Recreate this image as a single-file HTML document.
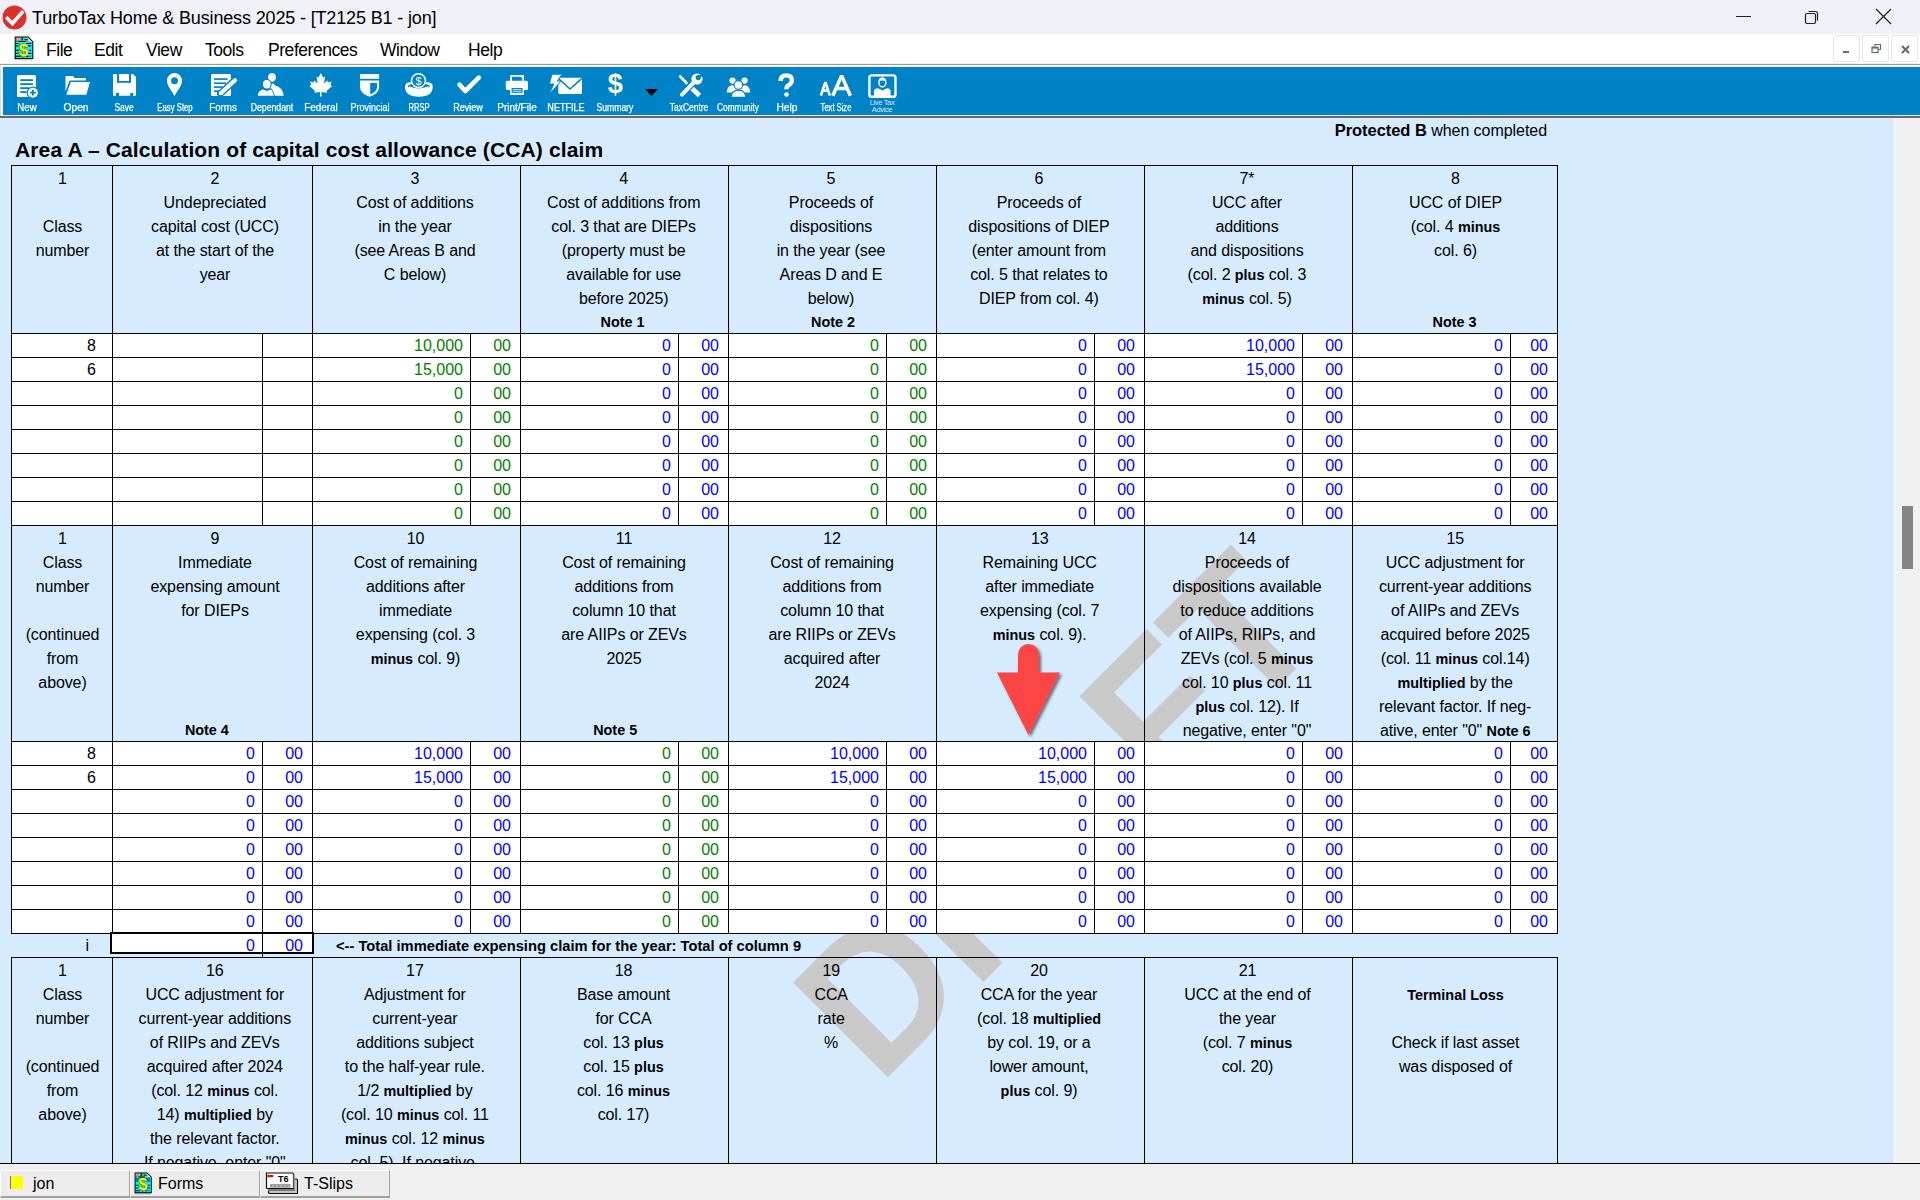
<!DOCTYPE html><html><head><meta charset="utf-8"><style>
*{margin:0;padding:0;box-sizing:border-box}
html,body{width:1920px;height:1200px;overflow:hidden;background:#fff}
body{position:relative;font-family:"Liberation Sans",sans-serif;color:#000}
.a{position:absolute}
.ln{position:absolute;background:#000}
.h{position:absolute;text-align:center;font-size:16px;line-height:24px;white-space:nowrap;letter-spacing:-0.1px}
.h b{font-size:14.4px;letter-spacing:0}
.v{position:absolute;text-align:right;font-size:16px;line-height:23px;height:23px;white-space:nowrap}
.g{color:#008000}.bl{color:#0000ff}
.tb{position:absolute;top:67px;width:49px;height:48px;color:#fff;text-align:center}
.tb span{position:absolute;left:0;right:0;top:35px;font-size:9.5px;line-height:10px;white-space:nowrap;letter-spacing:-0.3px}
.tb svg{position:absolute;left:50%;top:5px;transform:translateX(-50%)}
</style></head><body><div class="a" style="left:0;top:0;width:1920px;height:34px;background:#eff1f7"></div><svg class="a" style="left:2px;top:5px" width="25" height="25" viewBox="0 0 25 25"><circle cx="12.5" cy="12.5" r="12" fill="#d8322b"/><path d="M5.5 13.5 L10.5 18.5 L20 7.5" stroke="#fff" stroke-width="3.6" fill="none" stroke-linecap="square"/></svg><div class="a" style="left:32px;top:6px;font-size:18px;line-height:24px;white-space:nowrap;letter-spacing:-0.15px">TurboTax Home &amp; Business 2025 - [T2125 B1 - jon]</div><div class="a" style="left:1736px;top:16px;width:15px;height:1px;background:#222"></div><svg class="a" style="left:1804px;top:9px" width="16" height="16" viewBox="0 0 16 16"><rect x="1.5" y="4.5" width="10" height="10" rx="1.5" fill="none" stroke="#222" stroke-width="1.2"/><path d="M4.5 2.5 H11.5 Q13.5 2.5 13.5 4.5 V11.5" fill="none" stroke="#222" stroke-width="1.2"/></svg><svg class="a" style="left:1875px;top:8px" width="17" height="17" viewBox="0 0 17 17"><path d="M1 1 L16 16 M16 1 L1 16" stroke="#222" stroke-width="1.3"/></svg><div class="a" style="left:0;top:34px;width:1920px;height:30px;background:#fff"></div><div class="a" style="left:0;top:63px;width:1920px;height:1px;background:#f1f1f1"></div><div class="a" style="left:0;top:64px;width:1920px;height:1px;background:#9a9a9a"></div><svg class="a" style="left:14px;top:36px" width="22" height="25" viewBox="0 0 22 25">
<path d="M0.3 1.8 V23.5 H18 V24.2 H0.8 Z" fill="#9a9a9a"/>
<path d="M0.7 0.5 H14.3 L19.3 5.5 V23 H0.7 Z" fill="#000"/>
<path d="M1.7 1.5 H13.8 L18.3 6 V22 H1.7 Z" fill="#00f6f6"/>
<path d="M13.8 1.5 V6 H18.3" fill="#c8f8f8" stroke="#888" stroke-width="0.9"/>
<rect x="1.7" y="1.6" width="5.6" height="2.8" fill="#ff1a1a"/><rect x="2.6" y="2.2" width="3.8" height="1.6" fill="#fff"/><rect x="3.6" y="2.6" width="1.8" height="0.8" fill="#e00"/>
<path d="M8.3 1.5 V4.5 M10.5 3.6 H13.5 M2.5 5.5 H3.2 M4.5 5.5 H12 M1.7 7.5 H5 M12.3 7.5 H17.2 M1.7 9.9 H4.2 M13.8 9.9 H17.2 M1.7 14.4 H5 M15 14.4 H17.2 M1.7 17.4 H4.2 M13.8 17.4 H17.2 M1.7 20.4 H6.6 M12.3 20.4 H14.6 M15.8 20.4 H16.8" stroke="#000" stroke-width="1.1"/>
<text x="9.6" y="20" font-family="Liberation Sans" font-weight="bold" font-size="17" fill="#fff000" stroke="#000" stroke-width="0.6" paint-order="stroke" text-anchor="middle">$</text>
</svg><div class="a" style="left:46px;top:38px;font-size:17.5px;line-height:24px;white-space:nowrap;letter-spacing:-0.45px">File</div><div class="a" style="left:94px;top:38px;font-size:17.5px;line-height:24px;white-space:nowrap;letter-spacing:-0.45px">Edit</div><div class="a" style="left:146px;top:38px;font-size:17.5px;line-height:24px;white-space:nowrap;letter-spacing:-0.45px">View</div><div class="a" style="left:205px;top:38px;font-size:17.5px;line-height:24px;white-space:nowrap;letter-spacing:-0.45px">Tools</div><div class="a" style="left:268px;top:38px;font-size:17.5px;line-height:24px;white-space:nowrap;letter-spacing:-0.45px">Preferences</div><div class="a" style="left:380px;top:38px;font-size:17.5px;line-height:24px;white-space:nowrap;letter-spacing:-0.45px">Window</div><div class="a" style="left:468px;top:38px;font-size:17.5px;line-height:24px;white-space:nowrap;letter-spacing:-0.45px">Help</div><div class="a" style="left:1833px;top:35px;width:27px;height:27px;border:1px solid #e6e6e6;border-radius:2px;background:#fff"></div><div class="a" style="left:1862px;top:35px;width:27px;height:27px;border:1px solid #e6e6e6;border-radius:2px;background:#fff"></div><div class="a" style="left:1891px;top:35px;width:27px;height:27px;border:1px solid #e6e6e6;border-radius:2px;background:#fff"></div><div class="a" style="left:1843px;top:51px;width:6px;height:2px;background:#5f6c7a"></div><svg class="a" style="left:1870px;top:43px" width="12" height="12" viewBox="0 0 12 12"><path d="M5 3.5 V1.5 H10.5 V6.5 H8" fill="none" stroke="#5f6c7a" stroke-width="1.2"/><rect x="2" y="4.2" width="6" height="5.3" fill="none" stroke="#5f6c7a" stroke-width="1.2"/><rect x="2" y="4" width="6" height="1.6" fill="#5f6c7a"/></svg><svg class="a" style="left:1901px;top:45px" width="9" height="9" viewBox="0 0 9 9"><path d="M1 1 L8 8 M8 1 L1 8" stroke="#5f6c7a" stroke-width="2"/></svg><div class="a" style="left:0;top:65px;width:1920px;height:53px;background:#f4f4f4;border-top:1px solid #fff"></div><div class="a" style="left:3px;top:67px;width:1917px;height:48px;background:#0082c6"></div><div class="a" style="left:0;top:115px;width:1920px;height:1px;background:#e8e8e8"></div><div class="a" style="left:0;top:116px;width:1920px;height:2px;background:#6a6a6a"></div><div class="a" style="left:0;top:65px;width:1px;height:51px;background:#dcdcdc"></div><svg class="a" style="left:0;top:0" width="960" height="120" viewBox="0 0 960 120"><rect x="17" y="75" width="19" height="22" rx="1.5" fill="#fff"/><rect x="20.2" y="79.2" width="12.8" height="1.8" fill="#0082c6"/><rect x="20.2" y="83.2" width="12.8" height="1.8" fill="#0082c6"/><rect x="20.2" y="87.2" width="8.8" height="1.8" fill="#0082c6"/><rect x="20.2" y="91.2" width="6.300000000000001" height="1.8" fill="#0082c6"/><circle cx="32.9" cy="92.7" r="6.3" fill="#0082c6"/><circle cx="32.9" cy="92.7" r="5" fill="#fff"/><path d="M32.9 89.8 V95.6 M30 92.7 H35.8" stroke="#0082c6" stroke-width="1.8"/><path d="M65.5 76 H73 L74.5 78 H85.8 V80.5 H69.6 L65.5 91.5 Z" fill="#fff"/><path d="M70.8 82 H90 L86.3 94.8 H66.3 Z" fill="#fff"/><path d="M113 74 H133 L136 77 V95.8 H133.2 V93 H130.2 V95.8 H119 V93 H116 V95.8 H113 Z" fill="#fff"/><path d="M117 74 H131 V82.8 H117 Z" fill="#0082c6"/><rect x="119" y="74" width="10" height="6.9" fill="#fff"/><path d="M174.5 96.3 C171.5 90.5 167 86 167 80.6 A7.5 7.5 0 0 1 182 80.6 C182 86 177.5 90.5 174.5 96.3 Z" fill="#fff"/><circle cx="174.5" cy="80.8" r="3.5" fill="#0082c6"/><rect x="211" y="74" width="20" height="22.1" rx="1.5" fill="#fff"/><rect x="214" y="78.2" width="13.5" height="1.7" fill="#0082c6"/><rect x="214" y="82.4" width="12" height="1.7" fill="#0082c6"/><rect x="214" y="86.2" width="8.5" height="1.7" fill="#0082c6"/><rect x="214" y="90.3" width="5.5" height="1.7" fill="#0082c6"/><path d="M220.5 93.5 L235 80" stroke="#0082c6" stroke-width="7" stroke-linecap="round"/><path d="M221 93 L235 80.2" stroke="#fff" stroke-width="4.2" stroke-linecap="round"/><path d="M218.8 95.3 L219.8 91 L223.2 94.2 Z" fill="#fff"/><ellipse cx="272" cy="77.3" rx="3.9" ry="4.4" fill="#fff"/><path d="M268.6 95.7 L268.6 86 Q269.5 83.6 272 83.5 Q274.5 83.6 275 85.5 Q282.5 87 283.8 95.7 Z" fill="#fff"/><ellipse cx="266.8" cy="84.3" rx="4.9" ry="5.3" fill="#0082c6"/><path d="M256.4 96.6 Q257 89.5 262.5 88.3 L271 88.3 Q273.2 89.5 275 96.6 Z" fill="#0082c6"/><ellipse cx="266.8" cy="84.3" rx="3.8" ry="4.2" fill="#fff"/><path d="M257.8 95.7 Q258.5 90.2 263 89.4 L266.8 91 L270.5 89.4 Q273 90.5 273.8 95.7 Z" fill="#fff"/><path d="M320.8 73 L323.2 77.4 L325 76.6 L324 83.5 L327.2 80.6 L328 82.4 L331.5 81.6 L330.5 85 L332.1 86 L326.5 91 L327.2 92.8 L321.5 92.1 L321.6 96.4 L320 96.4 L320.1 92.1 L314.4 92.8 L315.1 91 L309.5 86 L311.1 85 L310.1 81.6 L313.6 82.4 L314.4 80.6 L317.6 83.5 L316.6 76.6 L318.4 77.4 Z" fill="#fff"/><rect x="360" y="74" width="19.1" height="4.8" fill="#fff"/><path d="M360 80.5 H379.1 V87 Q379.1 93.3 369.6 96.8 Q360 93.3 360 87 Z" fill="#fff"/><path d="M370.2 83 H377 V87 Q377 92 370.2 94.5 Z" fill="#0082c6"/><path d="M405 86.6 Q405 82.2 411 82.2 L426.7 82.2 Q432.7 82.2 432.7 86.6 Q432.7 96.8 418.85 96.8 Q405 96.8 405 86.6 Z" fill="#fff"/><ellipse cx="418.85" cy="86.3" rx="11.2" ry="2.9" fill="#0082c6"/><ellipse cx="418.5" cy="80.6" rx="7.7" ry="7.6" fill="#fff"/><ellipse cx="418.5" cy="80.6" rx="6.2" ry="6.2" fill="#0082c6"/><path d="M408.8 86.3 Q418.6 90.6 428.8 86.3 L428 89 Q418.6 92 409.5 89 Z" fill="#fff"/><text x="418.6" y="85.2" font-family="Liberation Sans" font-size="11" fill="#fff" text-anchor="middle">$</text><path d="M459.6 84.8 L465.3 91 L478.8 77.6" stroke="#fff" stroke-width="4.6" fill="none" stroke-linecap="round" stroke-linejoin="round"/><rect x="510.2" y="74.9" width="13.8" height="7" rx="1" fill="#fff"/><path d="M512 76.8 H520.5 L522.2 78.5 V81.5 H512 Z" fill="#0082c6"/><rect x="505.8" y="80.8" width="22.2" height="9.1" rx="1.5" fill="#fff"/><rect x="510.2" y="87.3" width="13.8" height="7.7" fill="#fff"/><rect x="512.2" y="88.6" width="9.8" height="3.6" fill="none" stroke="#0082c6" stroke-width="1.2"/><path d="M512.2 90.4 H522" stroke="#0082c6" stroke-width="0.9"/><path d="M558.3 79 Q558.3 77.8 559.5 77.8 H580.8 Q582 77.8 582 79 V92.7 Q582 93.9 580.8 93.9 H559.5 Q558.3 93.9 558.3 92.7 Z" fill="#fff"/><path d="M558.6 78.6 L570.1 89.1 L581.6 78.6" stroke="#0082c6" stroke-width="1.5" fill="none"/><path d="M552 74.2 H562.2 L557.2 81 H561 L549.2 94.5 L553.8 84 H549.3 Z" fill="#fff" stroke="#0082c6" stroke-width="1"/><text x="615.2" y="93" font-family="Liberation Sans" font-weight="bold" font-size="27" fill="#fff" text-anchor="middle">$</text><path d="M645 89 H658 L651.5 95.9 Z" fill="#000"/><path d="M680.2 76.5 L686.5 83" stroke="#fff" stroke-width="2.6" stroke-linecap="round"/><path d="M690.5 87 L699.5 95.5" stroke="#fff" stroke-width="4.8"/><path d="M682 94.6 L695 81.2" stroke="#0082c6" stroke-width="6.4" stroke-linecap="round"/><path d="M682 94.6 L695 81.2" stroke="#fff" stroke-width="4" stroke-linecap="round"/><circle cx="697" cy="79" r="5.6" fill="#fff"/><circle cx="698.3" cy="77.6" r="2.6" fill="#0082c6"/><path d="M698.3 77.6 L702 72.5 L705 75.8 Z" fill="#0082c6"/><circle cx="732.5" cy="80.6" r="3.1" fill="#fff"/><circle cx="744.6" cy="80.6" r="3.1" fill="#fff"/><path d="M726.7 92.6 Q727 85.3 732.5 85.2 Q738 85.3 738.3 92.6 Z" fill="#fff"/><path d="M738.8 92.6 Q739 85.3 744.6 85.2 Q750 85.3 750.2 92.6 Z" fill="#fff"/><circle cx="738.4" cy="85" r="4.8" fill="#0082c6"/><circle cx="738.4" cy="85" r="3.7" fill="#fff"/><path d="M730.5 97.5 Q731 89.8 738.4 89.6 Q745.8 89.8 746.3 97.5 Z" fill="#0082c6"/><path d="M731.7 96.8 Q732.2 91 738.4 90.8 Q744.6 91 745.1 96.8 Z" fill="#fff"/><path d="M780.6 81 Q780.6 75.3 786.2 75.3 Q791.9 75.3 791.9 80.3 Q791.9 83.6 788.6 85.2 Q786.4 86.3 786.4 89.3" stroke="#fff" stroke-width="4.3" fill="none"/><circle cx="786.5" cy="94.5" r="2.3" fill="#fff"/><path d="M820.9 95.7 L825.4 82.2 L829.9 95.7 M822.8 90.6 H828" stroke="#fff" stroke-width="2.6" fill="none" stroke-linejoin="bevel"/><path d="M832.8 95.7 L841.6 75.6 L850.4 95.7 M836 88.6 H847.2" stroke="#fff" stroke-width="3.5" fill="none" stroke-linejoin="bevel"/><rect x="869.4" y="75.4" width="26.1" height="21.3" rx="2.3" fill="none" stroke="#fff" stroke-width="2.4"/><path d="M874 96.8 V91.3 Q874 88.6 877.8 88.3 L882.4 90.6 L887 88.3 Q890.6 88.6 890.6 91.3 V96.8 Z" fill="#fff"/><ellipse cx="882.4" cy="82.4" rx="3.5" ry="4.4" fill="#0082c6" stroke="#fff" stroke-width="1.4"/><path d="M878.9 81 Q879.5 77.8 882.4 77.8 Q885.3 77.8 885.9 81 Q882.4 79.8 878.9 81 Z" fill="#fff"/></svg><div class="a" style="left:-12.899999999999999px;top:101.5px;width:80px;text-align:center;font-size:10px;line-height:12px;color:#fff;white-space:nowrap;-webkit-text-stroke:0.25px #fff;transform:scaleX(0.965)">New</div><div class="a" style="left:35.900000000000006px;top:101.5px;width:80px;text-align:center;font-size:10px;line-height:12px;color:#fff;white-space:nowrap;-webkit-text-stroke:0.25px #fff;transform:scaleX(1.030)">Open</div><div class="a" style="left:83.8px;top:101.5px;width:80px;text-align:center;font-size:10px;line-height:12px;color:#fff;white-space:nowrap;-webkit-text-stroke:0.25px #fff;transform:scaleX(0.842)">Save</div><div class="a" style="left:134.75px;top:101.5px;width:80px;text-align:center;font-size:10px;line-height:12px;color:#fff;white-space:nowrap;-webkit-text-stroke:0.25px #fff;transform:scaleX(0.774)">Easy Step</div><div class="a" style="left:183px;top:101.5px;width:80px;text-align:center;font-size:10px;line-height:12px;color:#fff;white-space:nowrap;-webkit-text-stroke:0.25px #fff;transform:scaleX(0.971)">Forms</div><div class="a" style="left:231.85000000000002px;top:101.5px;width:80px;text-align:center;font-size:10px;line-height:12px;color:#fff;white-space:nowrap;-webkit-text-stroke:0.25px #fff;transform:scaleX(0.869)">Dependant</div><div class="a" style="left:280.75px;top:101.5px;width:80px;text-align:center;font-size:10px;line-height:12px;color:#fff;white-space:nowrap;-webkit-text-stroke:0.25px #fff;transform:scaleX(0.982)">Federal</div><div class="a" style="left:329.85px;top:101.5px;width:80px;text-align:center;font-size:10px;line-height:12px;color:#fff;white-space:nowrap;-webkit-text-stroke:0.25px #fff;transform:scaleX(0.904)">Provincial</div><div class="a" style="left:378.8px;top:101.5px;width:80px;text-align:center;font-size:10px;line-height:12px;color:#fff;white-space:nowrap;-webkit-text-stroke:0.25px #fff;transform:scaleX(0.763)">RRSP</div><div class="a" style="left:427.95px;top:101.5px;width:80px;text-align:center;font-size:10px;line-height:12px;color:#fff;white-space:nowrap;-webkit-text-stroke:0.25px #fff;transform:scaleX(0.906)">Review</div><div class="a" style="left:476.85px;top:101.5px;width:80px;text-align:center;font-size:10px;line-height:12px;color:#fff;white-space:nowrap;-webkit-text-stroke:0.25px #fff;transform:scaleX(1.001)">Print/File</div><div class="a" style="left:525.75px;top:101.5px;width:80px;text-align:center;font-size:10px;line-height:12px;color:#fff;white-space:nowrap;-webkit-text-stroke:0.25px #fff;transform:scaleX(0.907)">NETFILE</div><div class="a" style="left:574.8px;top:101.5px;width:80px;text-align:center;font-size:10px;line-height:12px;color:#fff;white-space:nowrap;-webkit-text-stroke:0.25px #fff;transform:scaleX(0.860)">Summary</div><div class="a" style="left:648.55px;top:101.5px;width:80px;text-align:center;font-size:10px;line-height:12px;color:#fff;white-space:nowrap;-webkit-text-stroke:0.25px #fff;transform:scaleX(0.845)">TaxCentre</div><div class="a" style="left:698.1px;top:101.5px;width:80px;text-align:center;font-size:10px;line-height:12px;color:#fff;white-space:nowrap;-webkit-text-stroke:0.25px #fff;transform:scaleX(0.827)">Community</div><div class="a" style="left:746.9px;top:101.5px;width:80px;text-align:center;font-size:10px;line-height:12px;color:#fff;white-space:nowrap;-webkit-text-stroke:0.25px #fff;transform:scaleX(1.021)">Help</div><div class="a" style="left:796px;top:101.5px;width:80px;text-align:center;font-size:10px;line-height:12px;color:#fff;white-space:nowrap;-webkit-text-stroke:0.25px #fff;transform:scaleX(0.759)">Text Size</div><div class="a" style="left:861px;top:100px;width:42px;text-align:center;font-size:7.4px;line-height:6.8px;color:#d8eaf6;white-space:nowrap;letter-spacing:-0.3px">Live Tax<br>Advice</div><div class="a" style="left:0;top:118px;width:1894px;height:1045px;background:#d7ebff"></div><div class="a" style="left:1894px;top:118px;width:1px;height:1045px;background:#fff"></div><div class="a" style="left:1895px;top:118px;width:25px;height:1045px;background:#f0f0f0"></div><div class="a" style="left:1902px;top:506px;width:11px;height:63px;background:#858585"></div><div class="a" style="left:15px;top:137px;font-size:21px;line-height:26px;font-weight:bold;white-space:nowrap;letter-spacing:0.13px">Area A – Calculation of capital cost allowance (CCA) claim</div><div class="a" style="left:1200px;width:347px;top:120px;font-size:16px;line-height:20px;text-align:right;white-space:nowrap;letter-spacing:-0.05px"><b style="font-size:16.5px">Protected B</b> when completed</div><div class="a" style="left:1056px;top:814.5px;width:0;height:0"><div style="position:absolute;left:-500px;top:-150px;width:1000px;height:300px;transform:rotate(-45deg) scaleY(1.041);text-align:center;font-size:187px;line-height:300px;font-weight:bold;color:#c9c9c9;white-space:nowrap">DRAFT</div></div><div class="a" style="left:11px;top:333px;width:1546px;height:192px;background:#fff"></div><div class="a" style="left:11px;top:741px;width:1546px;height:192px;background:#fff"></div><div class="a" style="left:112px;top:933px;width:200px;height:21px;background:#fff"></div><div class="h" style="left:12.5px;width:100px;top:167px">1</div><div class="h" style="left:12.5px;width:100px;top:215px">Class</div><div class="h" style="left:12.5px;width:100px;top:239px">number</div><div class="h" style="left:115.5px;width:199px;top:167px">2</div><div class="h" style="left:115.5px;width:199px;top:191px">Undepreciated</div><div class="h" style="left:115.5px;width:199px;top:215px">capital cost (UCC)</div><div class="h" style="left:115.5px;width:199px;top:239px">at the start of the</div><div class="h" style="left:115.5px;width:199px;top:263px">year</div><div class="h" style="left:311.5px;width:207px;top:167px">3</div><div class="h" style="left:311.5px;width:207px;top:191px">Cost of additions</div><div class="h" style="left:311.5px;width:207px;top:215px">in the year</div><div class="h" style="left:311.5px;width:207px;top:239px">(see Areas B and</div><div class="h" style="left:311.5px;width:207px;top:263px">C below)</div><div class="h" style="left:520.2px;width:207px;top:167px">4</div><div class="h" style="left:520.2px;width:207px;top:191px">Cost of additions from</div><div class="h" style="left:520.2px;width:207px;top:215px">col. 3 that are DIEPs</div><div class="h" style="left:520.2px;width:207px;top:239px">(property must be</div><div class="h" style="left:520.2px;width:207px;top:263px">available for use</div><div class="h" style="left:520.2px;width:207px;top:287px">before 2025)</div><div class="h" style="left:519px;width:207px;top:309.5px"><b>Note 1</b></div><div class="h" style="left:727.5px;width:207px;top:167px">5</div><div class="h" style="left:727.5px;width:207px;top:191px">Proceeds of</div><div class="h" style="left:727.5px;width:207px;top:215px">dispositions</div><div class="h" style="left:727.5px;width:207px;top:239px">in the year (see</div><div class="h" style="left:727.5px;width:207px;top:263px">Areas D and E</div><div class="h" style="left:727.5px;width:207px;top:287px">below)</div><div class="h" style="left:729.6px;width:207px;top:309.5px"><b>Note 2</b></div><div class="h" style="left:935.4px;width:207px;top:167px">6</div><div class="h" style="left:935.4px;width:207px;top:191px">Proceeds of</div><div class="h" style="left:935.4px;width:207px;top:215px">dispositions of DIEP</div><div class="h" style="left:935.4px;width:207px;top:239px">(enter amount from</div><div class="h" style="left:935.4px;width:207px;top:263px">col. 5 that relates to</div><div class="h" style="left:935.4px;width:207px;top:287px">DIEP from col. 4)</div><div class="h" style="left:1143.5px;width:207px;top:167px">7*</div><div class="h" style="left:1143.5px;width:207px;top:191px">UCC after</div><div class="h" style="left:1143.5px;width:207px;top:215px">additions</div><div class="h" style="left:1143.5px;width:207px;top:239px">and dispositions</div><div class="h" style="left:1143.5px;width:207px;top:263px">(col. 2 <b>plus</b> col. 3</div><div class="h" style="left:1143.5px;width:207px;top:287px"><b>minus</b> col. 5)</div><div class="h" style="left:1353.5px;width:204px;top:167px">8</div><div class="h" style="left:1353.5px;width:204px;top:191px">UCC of DIEP</div><div class="h" style="left:1353.5px;width:204px;top:215px">(col. 4 <b>minus</b></div><div class="h" style="left:1353.5px;width:204px;top:239px">col. 6)</div><div class="h" style="left:1352.6px;width:204px;top:309.5px"><b>Note 3</b></div><div class="h" style="left:12.5px;width:100px;top:527px">1</div><div class="h" style="left:12.5px;width:100px;top:551px">Class</div><div class="h" style="left:12.5px;width:100px;top:575px">number</div><div class="h" style="left:12.5px;width:100px;top:623px">(continued</div><div class="h" style="left:12.5px;width:100px;top:647px">from</div><div class="h" style="left:12.5px;width:100px;top:671px">above)</div><div class="h" style="left:115.5px;width:199px;top:527px">9</div><div class="h" style="left:115.5px;width:199px;top:551px">Immediate</div><div class="h" style="left:115.5px;width:199px;top:575px">expensing amount</div><div class="h" style="left:115.5px;width:199px;top:599px">for DIEPs</div><div class="h" style="left:107.4px;width:199px;top:717.5px"><b>Note 4</b></div><div class="h" style="left:312px;width:207px;top:527px">10</div><div class="h" style="left:312px;width:207px;top:551px">Cost of remaining</div><div class="h" style="left:312px;width:207px;top:575px">additions after</div><div class="h" style="left:312px;width:207px;top:599px">immediate</div><div class="h" style="left:312px;width:207px;top:623px">expensing (col. 3</div><div class="h" style="left:312px;width:207px;top:647px"><b>minus</b> col. 9)</div><div class="h" style="left:520.5px;width:207px;top:527px">11</div><div class="h" style="left:520.5px;width:207px;top:551px">Cost of remaining</div><div class="h" style="left:520.5px;width:207px;top:575px">additions from</div><div class="h" style="left:520.5px;width:207px;top:599px">column 10 that</div><div class="h" style="left:520.5px;width:207px;top:623px">are AIIPs or ZEVs</div><div class="h" style="left:520.5px;width:207px;top:647px">2025</div><div class="h" style="left:511.7px;width:207px;top:717.5px"><b>Note 5</b></div><div class="h" style="left:728.5px;width:207px;top:527px">12</div><div class="h" style="left:728.5px;width:207px;top:551px">Cost of remaining</div><div class="h" style="left:728.5px;width:207px;top:575px">additions from</div><div class="h" style="left:728.5px;width:207px;top:599px">column 10 that</div><div class="h" style="left:728.5px;width:207px;top:623px">are RIIPs or ZEVs</div><div class="h" style="left:728.5px;width:207px;top:647px">acquired after</div><div class="h" style="left:728.5px;width:207px;top:671px">2024</div><div class="h" style="left:936.2px;width:207px;top:527px">13</div><div class="h" style="left:936.2px;width:207px;top:551px">Remaining UCC</div><div class="h" style="left:936.2px;width:207px;top:575px">after immediate</div><div class="h" style="left:936.2px;width:207px;top:599px">expensing (col. 7</div><div class="h" style="left:936.2px;width:207px;top:623px"><b>minus</b> col. 9).</div><div class="h" style="left:1143.5px;width:207px;top:527px">14</div><div class="h" style="left:1143.5px;width:207px;top:551px">Proceeds of</div><div class="h" style="left:1143.5px;width:207px;top:575px">dispositions available</div><div class="h" style="left:1143.5px;width:207px;top:599px">to reduce additions</div><div class="h" style="left:1143.5px;width:207px;top:623px">of AIIPs, RIIPs, and</div><div class="h" style="left:1143.5px;width:207px;top:647px">ZEVs (col. 5 <b>minus</b></div><div class="h" style="left:1143.5px;width:207px;top:671px">col. 10 <b>plus</b> col. 11</div><div class="h" style="left:1143.5px;width:207px;top:695px"><b>plus</b> col. 12). If</div><div class="h" style="left:1143.5px;width:207px;top:719px">negative, enter "0"</div><div class="h" style="left:1353.2px;width:204px;top:527px">15</div><div class="h" style="left:1353.2px;width:204px;top:551px">UCC adjustment for</div><div class="h" style="left:1353.2px;width:204px;top:575px">current-year additions</div><div class="h" style="left:1353.2px;width:204px;top:599px">of AIIPs and ZEVs</div><div class="h" style="left:1353.2px;width:204px;top:623px">acquired before 2025</div><div class="h" style="left:1353.2px;width:204px;top:647px">(col. 11 <b>minus</b> col.14)</div><div class="h" style="left:1353.2px;width:204px;top:671px"><b>multiplied</b> by the</div><div class="h" style="left:1353.2px;width:204px;top:695px">relevant factor. If neg-</div><div class="h" style="left:1353.2px;width:204px;top:719px">ative, enter "0" <b>Note 6</b></div><div class="h" style="left:12.5px;width:100px;top:959px">1</div><div class="h" style="left:12.5px;width:100px;top:983px">Class</div><div class="h" style="left:12.5px;width:100px;top:1007px">number</div><div class="h" style="left:12.5px;width:100px;top:1055px">(continued</div><div class="h" style="left:12.5px;width:100px;top:1079px">from</div><div class="h" style="left:12.5px;width:100px;top:1103px">above)</div><div class="h" style="left:115.3px;width:199px;top:959px">16</div><div class="h" style="left:115.3px;width:199px;top:983px">UCC adjustment for</div><div class="h" style="left:115.3px;width:199px;top:1007px">current-year additions</div><div class="h" style="left:115.3px;width:199px;top:1031px">of RIIPs and ZEVs</div><div class="h" style="left:115.3px;width:199px;top:1055px">acquired after 2024</div><div class="h" style="left:115.3px;width:199px;top:1079px">(col. 12 <b>minus</b> col.</div><div class="h" style="left:115.3px;width:199px;top:1103px">14) <b>multiplied</b> by</div><div class="h" style="left:115.3px;width:199px;top:1127px">the relevant factor.</div><div class="h" style="left:115.3px;width:199px;top:1151px">If negative, enter "0"</div><div class="h" style="left:311.4px;width:207px;top:959px">17</div><div class="h" style="left:311.4px;width:207px;top:983px">Adjustment for</div><div class="h" style="left:311.4px;width:207px;top:1007px">current-year</div><div class="h" style="left:311.4px;width:207px;top:1031px">additions subject</div><div class="h" style="left:311.4px;width:207px;top:1055px">to the half-year rule.</div><div class="h" style="left:311.4px;width:207px;top:1079px">1/2 <b>multiplied</b> by</div><div class="h" style="left:311.4px;width:207px;top:1103px">(col. 10 <b>minus</b> col. 11</div><div class="h" style="left:311.4px;width:207px;top:1127px"><b>minus</b> col. 12 <b>minus</b></div><div class="h" style="left:311.4px;width:207px;top:1151px">col. 5). If negative,</div><div class="h" style="left:520px;width:207px;top:959px">18</div><div class="h" style="left:520px;width:207px;top:983px">Base amount</div><div class="h" style="left:520px;width:207px;top:1007px">for CCA</div><div class="h" style="left:520px;width:207px;top:1031px">col. 13 <b>plus</b></div><div class="h" style="left:520px;width:207px;top:1055px">col. 15 <b>plus</b></div><div class="h" style="left:520px;width:207px;top:1079px">col. 16 <b>minus</b></div><div class="h" style="left:520px;width:207px;top:1103px">col. 17)</div><div class="h" style="left:727.7px;width:207px;top:959px">19</div><div class="h" style="left:727.7px;width:207px;top:983px">CCA</div><div class="h" style="left:727.7px;width:207px;top:1007px">rate</div><div class="h" style="left:727.7px;width:207px;top:1031px">%</div><div class="h" style="left:935.5px;width:207px;top:959px">20</div><div class="h" style="left:935.5px;width:207px;top:983px">CCA for the year</div><div class="h" style="left:935.5px;width:207px;top:1007px">(col. 18 <b>multiplied</b></div><div class="h" style="left:935.5px;width:207px;top:1031px">by col. 19, or a</div><div class="h" style="left:935.5px;width:207px;top:1055px">lower amount,</div><div class="h" style="left:935.5px;width:207px;top:1079px"><b>plus</b> col. 9)</div><div class="h" style="left:1144px;width:207px;top:959px">21</div><div class="h" style="left:1144px;width:207px;top:983px">UCC at the end of</div><div class="h" style="left:1144px;width:207px;top:1007px">the year</div><div class="h" style="left:1144px;width:207px;top:1031px">(col. 7 <b>minus</b></div><div class="h" style="left:1144px;width:207px;top:1055px">col. 20)</div><div class="h" style="left:1353.5px;width:204px;top:983px"><b>Terminal Loss</b></div><div class="h" style="left:1353.5px;width:204px;top:1031px">Check if last asset</div><div class="h" style="left:1353.5px;width:204px;top:1055px">was disposed of</div><div class="v g" style="left:312px;width:151px;top:334px">10,000</div><div class="v g" style="left:470px;width:41px;top:334px">00</div><div class="v bl" style="left:520px;width:151px;top:334px">0</div><div class="v bl" style="left:678px;width:41px;top:334px">00</div><div class="v g" style="left:728px;width:151px;top:334px">0</div><div class="v g" style="left:886px;width:41px;top:334px">00</div><div class="v bl" style="left:936px;width:151px;top:334px">0</div><div class="v bl" style="left:1094px;width:41px;top:334px">00</div><div class="v bl" style="left:1144px;width:151px;top:334px">10,000</div><div class="v bl" style="left:1302px;width:41px;top:334px">00</div><div class="v bl" style="left:1352px;width:151px;top:334px">0</div><div class="v bl" style="left:1510px;width:38px;top:334px">00</div><div class="v g" style="left:312px;width:151px;top:358px">15,000</div><div class="v g" style="left:470px;width:41px;top:358px">00</div><div class="v bl" style="left:520px;width:151px;top:358px">0</div><div class="v bl" style="left:678px;width:41px;top:358px">00</div><div class="v g" style="left:728px;width:151px;top:358px">0</div><div class="v g" style="left:886px;width:41px;top:358px">00</div><div class="v bl" style="left:936px;width:151px;top:358px">0</div><div class="v bl" style="left:1094px;width:41px;top:358px">00</div><div class="v bl" style="left:1144px;width:151px;top:358px">15,000</div><div class="v bl" style="left:1302px;width:41px;top:358px">00</div><div class="v bl" style="left:1352px;width:151px;top:358px">0</div><div class="v bl" style="left:1510px;width:38px;top:358px">00</div><div class="v g" style="left:312px;width:151px;top:382px">0</div><div class="v g" style="left:470px;width:41px;top:382px">00</div><div class="v bl" style="left:520px;width:151px;top:382px">0</div><div class="v bl" style="left:678px;width:41px;top:382px">00</div><div class="v g" style="left:728px;width:151px;top:382px">0</div><div class="v g" style="left:886px;width:41px;top:382px">00</div><div class="v bl" style="left:936px;width:151px;top:382px">0</div><div class="v bl" style="left:1094px;width:41px;top:382px">00</div><div class="v bl" style="left:1144px;width:151px;top:382px">0</div><div class="v bl" style="left:1302px;width:41px;top:382px">00</div><div class="v bl" style="left:1352px;width:151px;top:382px">0</div><div class="v bl" style="left:1510px;width:38px;top:382px">00</div><div class="v g" style="left:312px;width:151px;top:406px">0</div><div class="v g" style="left:470px;width:41px;top:406px">00</div><div class="v bl" style="left:520px;width:151px;top:406px">0</div><div class="v bl" style="left:678px;width:41px;top:406px">00</div><div class="v g" style="left:728px;width:151px;top:406px">0</div><div class="v g" style="left:886px;width:41px;top:406px">00</div><div class="v bl" style="left:936px;width:151px;top:406px">0</div><div class="v bl" style="left:1094px;width:41px;top:406px">00</div><div class="v bl" style="left:1144px;width:151px;top:406px">0</div><div class="v bl" style="left:1302px;width:41px;top:406px">00</div><div class="v bl" style="left:1352px;width:151px;top:406px">0</div><div class="v bl" style="left:1510px;width:38px;top:406px">00</div><div class="v g" style="left:312px;width:151px;top:430px">0</div><div class="v g" style="left:470px;width:41px;top:430px">00</div><div class="v bl" style="left:520px;width:151px;top:430px">0</div><div class="v bl" style="left:678px;width:41px;top:430px">00</div><div class="v g" style="left:728px;width:151px;top:430px">0</div><div class="v g" style="left:886px;width:41px;top:430px">00</div><div class="v bl" style="left:936px;width:151px;top:430px">0</div><div class="v bl" style="left:1094px;width:41px;top:430px">00</div><div class="v bl" style="left:1144px;width:151px;top:430px">0</div><div class="v bl" style="left:1302px;width:41px;top:430px">00</div><div class="v bl" style="left:1352px;width:151px;top:430px">0</div><div class="v bl" style="left:1510px;width:38px;top:430px">00</div><div class="v g" style="left:312px;width:151px;top:454px">0</div><div class="v g" style="left:470px;width:41px;top:454px">00</div><div class="v bl" style="left:520px;width:151px;top:454px">0</div><div class="v bl" style="left:678px;width:41px;top:454px">00</div><div class="v g" style="left:728px;width:151px;top:454px">0</div><div class="v g" style="left:886px;width:41px;top:454px">00</div><div class="v bl" style="left:936px;width:151px;top:454px">0</div><div class="v bl" style="left:1094px;width:41px;top:454px">00</div><div class="v bl" style="left:1144px;width:151px;top:454px">0</div><div class="v bl" style="left:1302px;width:41px;top:454px">00</div><div class="v bl" style="left:1352px;width:151px;top:454px">0</div><div class="v bl" style="left:1510px;width:38px;top:454px">00</div><div class="v g" style="left:312px;width:151px;top:478px">0</div><div class="v g" style="left:470px;width:41px;top:478px">00</div><div class="v bl" style="left:520px;width:151px;top:478px">0</div><div class="v bl" style="left:678px;width:41px;top:478px">00</div><div class="v g" style="left:728px;width:151px;top:478px">0</div><div class="v g" style="left:886px;width:41px;top:478px">00</div><div class="v bl" style="left:936px;width:151px;top:478px">0</div><div class="v bl" style="left:1094px;width:41px;top:478px">00</div><div class="v bl" style="left:1144px;width:151px;top:478px">0</div><div class="v bl" style="left:1302px;width:41px;top:478px">00</div><div class="v bl" style="left:1352px;width:151px;top:478px">0</div><div class="v bl" style="left:1510px;width:38px;top:478px">00</div><div class="v g" style="left:312px;width:151px;top:502px">0</div><div class="v g" style="left:470px;width:41px;top:502px">00</div><div class="v bl" style="left:520px;width:151px;top:502px">0</div><div class="v bl" style="left:678px;width:41px;top:502px">00</div><div class="v g" style="left:728px;width:151px;top:502px">0</div><div class="v g" style="left:886px;width:41px;top:502px">00</div><div class="v bl" style="left:936px;width:151px;top:502px">0</div><div class="v bl" style="left:1094px;width:41px;top:502px">00</div><div class="v bl" style="left:1144px;width:151px;top:502px">0</div><div class="v bl" style="left:1302px;width:41px;top:502px">00</div><div class="v bl" style="left:1352px;width:151px;top:502px">0</div><div class="v bl" style="left:1510px;width:38px;top:502px">00</div><div class="v bl" style="left:112px;width:143px;top:742px">0</div><div class="v bl" style="left:262px;width:41px;top:742px">00</div><div class="v bl" style="left:312px;width:151px;top:742px">10,000</div><div class="v bl" style="left:470px;width:41px;top:742px">00</div><div class="v g" style="left:520px;width:151px;top:742px">0</div><div class="v g" style="left:678px;width:41px;top:742px">00</div><div class="v bl" style="left:728px;width:151px;top:742px">10,000</div><div class="v bl" style="left:886px;width:41px;top:742px">00</div><div class="v bl" style="left:936px;width:151px;top:742px">10,000</div><div class="v bl" style="left:1094px;width:41px;top:742px">00</div><div class="v bl" style="left:1144px;width:151px;top:742px">0</div><div class="v bl" style="left:1302px;width:41px;top:742px">00</div><div class="v bl" style="left:1352px;width:151px;top:742px">0</div><div class="v bl" style="left:1510px;width:38px;top:742px">00</div><div class="v bl" style="left:112px;width:143px;top:766px">0</div><div class="v bl" style="left:262px;width:41px;top:766px">00</div><div class="v bl" style="left:312px;width:151px;top:766px">15,000</div><div class="v bl" style="left:470px;width:41px;top:766px">00</div><div class="v g" style="left:520px;width:151px;top:766px">0</div><div class="v g" style="left:678px;width:41px;top:766px">00</div><div class="v bl" style="left:728px;width:151px;top:766px">15,000</div><div class="v bl" style="left:886px;width:41px;top:766px">00</div><div class="v bl" style="left:936px;width:151px;top:766px">15,000</div><div class="v bl" style="left:1094px;width:41px;top:766px">00</div><div class="v bl" style="left:1144px;width:151px;top:766px">0</div><div class="v bl" style="left:1302px;width:41px;top:766px">00</div><div class="v bl" style="left:1352px;width:151px;top:766px">0</div><div class="v bl" style="left:1510px;width:38px;top:766px">00</div><div class="v bl" style="left:112px;width:143px;top:790px">0</div><div class="v bl" style="left:262px;width:41px;top:790px">00</div><div class="v bl" style="left:312px;width:151px;top:790px">0</div><div class="v bl" style="left:470px;width:41px;top:790px">00</div><div class="v g" style="left:520px;width:151px;top:790px">0</div><div class="v g" style="left:678px;width:41px;top:790px">00</div><div class="v bl" style="left:728px;width:151px;top:790px">0</div><div class="v bl" style="left:886px;width:41px;top:790px">00</div><div class="v bl" style="left:936px;width:151px;top:790px">0</div><div class="v bl" style="left:1094px;width:41px;top:790px">00</div><div class="v bl" style="left:1144px;width:151px;top:790px">0</div><div class="v bl" style="left:1302px;width:41px;top:790px">00</div><div class="v bl" style="left:1352px;width:151px;top:790px">0</div><div class="v bl" style="left:1510px;width:38px;top:790px">00</div><div class="v bl" style="left:112px;width:143px;top:814px">0</div><div class="v bl" style="left:262px;width:41px;top:814px">00</div><div class="v bl" style="left:312px;width:151px;top:814px">0</div><div class="v bl" style="left:470px;width:41px;top:814px">00</div><div class="v g" style="left:520px;width:151px;top:814px">0</div><div class="v g" style="left:678px;width:41px;top:814px">00</div><div class="v bl" style="left:728px;width:151px;top:814px">0</div><div class="v bl" style="left:886px;width:41px;top:814px">00</div><div class="v bl" style="left:936px;width:151px;top:814px">0</div><div class="v bl" style="left:1094px;width:41px;top:814px">00</div><div class="v bl" style="left:1144px;width:151px;top:814px">0</div><div class="v bl" style="left:1302px;width:41px;top:814px">00</div><div class="v bl" style="left:1352px;width:151px;top:814px">0</div><div class="v bl" style="left:1510px;width:38px;top:814px">00</div><div class="v bl" style="left:112px;width:143px;top:838px">0</div><div class="v bl" style="left:262px;width:41px;top:838px">00</div><div class="v bl" style="left:312px;width:151px;top:838px">0</div><div class="v bl" style="left:470px;width:41px;top:838px">00</div><div class="v g" style="left:520px;width:151px;top:838px">0</div><div class="v g" style="left:678px;width:41px;top:838px">00</div><div class="v bl" style="left:728px;width:151px;top:838px">0</div><div class="v bl" style="left:886px;width:41px;top:838px">00</div><div class="v bl" style="left:936px;width:151px;top:838px">0</div><div class="v bl" style="left:1094px;width:41px;top:838px">00</div><div class="v bl" style="left:1144px;width:151px;top:838px">0</div><div class="v bl" style="left:1302px;width:41px;top:838px">00</div><div class="v bl" style="left:1352px;width:151px;top:838px">0</div><div class="v bl" style="left:1510px;width:38px;top:838px">00</div><div class="v bl" style="left:112px;width:143px;top:862px">0</div><div class="v bl" style="left:262px;width:41px;top:862px">00</div><div class="v bl" style="left:312px;width:151px;top:862px">0</div><div class="v bl" style="left:470px;width:41px;top:862px">00</div><div class="v g" style="left:520px;width:151px;top:862px">0</div><div class="v g" style="left:678px;width:41px;top:862px">00</div><div class="v bl" style="left:728px;width:151px;top:862px">0</div><div class="v bl" style="left:886px;width:41px;top:862px">00</div><div class="v bl" style="left:936px;width:151px;top:862px">0</div><div class="v bl" style="left:1094px;width:41px;top:862px">00</div><div class="v bl" style="left:1144px;width:151px;top:862px">0</div><div class="v bl" style="left:1302px;width:41px;top:862px">00</div><div class="v bl" style="left:1352px;width:151px;top:862px">0</div><div class="v bl" style="left:1510px;width:38px;top:862px">00</div><div class="v bl" style="left:112px;width:143px;top:886px">0</div><div class="v bl" style="left:262px;width:41px;top:886px">00</div><div class="v bl" style="left:312px;width:151px;top:886px">0</div><div class="v bl" style="left:470px;width:41px;top:886px">00</div><div class="v g" style="left:520px;width:151px;top:886px">0</div><div class="v g" style="left:678px;width:41px;top:886px">00</div><div class="v bl" style="left:728px;width:151px;top:886px">0</div><div class="v bl" style="left:886px;width:41px;top:886px">00</div><div class="v bl" style="left:936px;width:151px;top:886px">0</div><div class="v bl" style="left:1094px;width:41px;top:886px">00</div><div class="v bl" style="left:1144px;width:151px;top:886px">0</div><div class="v bl" style="left:1302px;width:41px;top:886px">00</div><div class="v bl" style="left:1352px;width:151px;top:886px">0</div><div class="v bl" style="left:1510px;width:38px;top:886px">00</div><div class="v bl" style="left:112px;width:143px;top:910px">0</div><div class="v bl" style="left:262px;width:41px;top:910px">00</div><div class="v bl" style="left:312px;width:151px;top:910px">0</div><div class="v bl" style="left:470px;width:41px;top:910px">00</div><div class="v g" style="left:520px;width:151px;top:910px">0</div><div class="v g" style="left:678px;width:41px;top:910px">00</div><div class="v bl" style="left:728px;width:151px;top:910px">0</div><div class="v bl" style="left:886px;width:41px;top:910px">00</div><div class="v bl" style="left:936px;width:151px;top:910px">0</div><div class="v bl" style="left:1094px;width:41px;top:910px">00</div><div class="v bl" style="left:1144px;width:151px;top:910px">0</div><div class="v bl" style="left:1302px;width:41px;top:910px">00</div><div class="v bl" style="left:1352px;width:151px;top:910px">0</div><div class="v bl" style="left:1510px;width:38px;top:910px">00</div><div class="v" style="left:11px;width:85px;top:334px">8</div><div class="v" style="left:11px;width:85px;top:358px">6</div><div class="v" style="left:11px;width:85px;top:742px">8</div><div class="v" style="left:11px;width:85px;top:766px">6</div><div class="v" style="left:11px;width:78px;top:934px">i</div><div class="v bl" style="left:112px;width:143px;top:934px">0</div><div class="v bl" style="left:262px;width:41px;top:934px">00</div><div class="a" style="left:336px;top:935px;font-size:14.7px;line-height:23px;font-weight:bold;white-space:nowrap">&lt;-- Total immediate expensing claim for the year: Total of column 9</div><div class="ln" style="left:11px;top:165px;width:1547px;height:1px;background:#000"></div><div class="ln" style="left:11px;top:333px;width:1547px;height:1px;background:#000"></div><div class="ln" style="left:11px;top:357px;width:1547px;height:1px;background:#000"></div><div class="ln" style="left:11px;top:381px;width:1547px;height:1px;background:#000"></div><div class="ln" style="left:11px;top:405px;width:1547px;height:1px;background:#000"></div><div class="ln" style="left:11px;top:429px;width:1547px;height:1px;background:#000"></div><div class="ln" style="left:11px;top:453px;width:1547px;height:1px;background:#000"></div><div class="ln" style="left:11px;top:477px;width:1547px;height:1px;background:#000"></div><div class="ln" style="left:11px;top:501px;width:1547px;height:1px;background:#000"></div><div class="ln" style="left:11px;top:525px;width:1547px;height:1px;background:#000"></div><div class="ln" style="left:11px;top:741px;width:1547px;height:1px;background:#000"></div><div class="ln" style="left:11px;top:765px;width:1547px;height:1px;background:#000"></div><div class="ln" style="left:11px;top:789px;width:1547px;height:1px;background:#000"></div><div class="ln" style="left:11px;top:813px;width:1547px;height:1px;background:#000"></div><div class="ln" style="left:11px;top:837px;width:1547px;height:1px;background:#000"></div><div class="ln" style="left:11px;top:861px;width:1547px;height:1px;background:#000"></div><div class="ln" style="left:11px;top:885px;width:1547px;height:1px;background:#000"></div><div class="ln" style="left:11px;top:909px;width:1547px;height:1px;background:#000"></div><div class="ln" style="left:11px;top:933px;width:1547px;height:1px;background:#000"></div><div class="ln" style="left:11px;top:957px;width:1547px;height:1px;background:#000"></div><div class="ln" style="left:11px;top:165px;width:1px;height:769px;background:#000"></div><div class="ln" style="left:11px;top:957px;width:1px;height:206px;background:#000"></div><div class="ln" style="left:112px;top:165px;width:1px;height:769px;background:#000"></div><div class="ln" style="left:112px;top:957px;width:1px;height:206px;background:#000"></div><div class="ln" style="left:312px;top:165px;width:1px;height:769px;background:#000"></div><div class="ln" style="left:312px;top:957px;width:1px;height:206px;background:#000"></div><div class="ln" style="left:520px;top:165px;width:1px;height:769px;background:#000"></div><div class="ln" style="left:520px;top:957px;width:1px;height:206px;background:#000"></div><div class="ln" style="left:728px;top:165px;width:1px;height:769px;background:#000"></div><div class="ln" style="left:728px;top:957px;width:1px;height:206px;background:#000"></div><div class="ln" style="left:936px;top:165px;width:1px;height:769px;background:#000"></div><div class="ln" style="left:936px;top:957px;width:1px;height:206px;background:#000"></div><div class="ln" style="left:1144px;top:165px;width:1px;height:769px;background:#000"></div><div class="ln" style="left:1144px;top:957px;width:1px;height:206px;background:#000"></div><div class="ln" style="left:1352px;top:165px;width:1px;height:769px;background:#000"></div><div class="ln" style="left:1352px;top:957px;width:1px;height:206px;background:#000"></div><div class="ln" style="left:1557px;top:165px;width:1px;height:769px;background:#000"></div><div class="ln" style="left:1557px;top:957px;width:1px;height:206px;background:#000"></div><div class="ln" style="left:262px;top:333px;width:1px;height:192px;background:#000"></div><div class="ln" style="left:262px;top:741px;width:1px;height:192px;background:#000"></div><div class="ln" style="left:470px;top:333px;width:1px;height:192px;background:#000"></div><div class="ln" style="left:470px;top:741px;width:1px;height:192px;background:#000"></div><div class="ln" style="left:678px;top:333px;width:1px;height:192px;background:#000"></div><div class="ln" style="left:678px;top:741px;width:1px;height:192px;background:#000"></div><div class="ln" style="left:886px;top:333px;width:1px;height:192px;background:#000"></div><div class="ln" style="left:886px;top:741px;width:1px;height:192px;background:#000"></div><div class="ln" style="left:1094px;top:333px;width:1px;height:192px;background:#000"></div><div class="ln" style="left:1094px;top:741px;width:1px;height:192px;background:#000"></div><div class="ln" style="left:1302px;top:333px;width:1px;height:192px;background:#000"></div><div class="ln" style="left:1302px;top:741px;width:1px;height:192px;background:#000"></div><div class="ln" style="left:1510px;top:333px;width:1px;height:192px;background:#000"></div><div class="ln" style="left:1510px;top:741px;width:1px;height:192px;background:#000"></div><div class="a" style="left:110px;top:932px;width:204px;height:22px;border:2px solid #000"></div><div class="ln" style="left:262px;top:933px;width:1px;height:24px;background:#000"></div><div class="ln" style="left:11px;top:933px;width:1px;height:0px;background:#000"></div><svg class="a" style="left:990px;top:640px" width="80" height="105" viewBox="0 0 80 105"><defs><filter id="sh" x="-30%" y="-30%" width="160%" height="160%"><feGaussianBlur in="SourceAlpha" stdDeviation="1.8"/><feOffset dx="1.5" dy="1.5"/><feComponentTransfer><feFuncA type="linear" slope="0.55"/></feComponentTransfer><feMerge><feMergeNode/><feMergeNode in="SourceGraphic"/></feMerge></filter></defs>
<path d="M28 14.5 A10.5 10.5 0 0 1 49 14.5 V32.5 H70 L38.5 95 L7 32.5 H28 Z" fill="#fc4444" filter="url(#sh)"/></svg><div class="a" style="left:0;top:1163px;width:1920px;height:1px;background:#000"></div><div class="a" style="left:0;top:1164px;width:1920px;height:36px;background:#f0f0f0"></div><div class="a" style="left:0px;top:1170px;width:130px;height:28px;background:#ececec;border-top:1px solid #fff;border-left:1px solid #fff;border-right:1px solid #a0a0a0;border-bottom:2px solid #a0a0a0"></div><div class="a" style="left:130px;top:1170px;width:130px;height:28px;background:#ececec;border-top:1px solid #fff;border-left:1px solid #fff;border-right:1px solid #a0a0a0;border-bottom:2px solid #a0a0a0"></div><div class="a" style="left:260px;top:1170px;width:130px;height:28px;background:#ececec;border-top:1px solid #fff;border-left:1px solid #fff;border-right:1px solid #a0a0a0;border-bottom:2px solid #a0a0a0"></div><div class="a" style="left:10px;top:1176px;width:13px;height:13px;background:#ffff00;border-left:1px solid #777"></div><div class="a" style="left:33px;top:1173px;font-size:16px;line-height:22px">jon</div><svg class="a" style="left:134px;top:1172px" width="20.240000000000002" height="23.0" viewBox="0 0 22 25">
<path d="M0.3 1.8 V23.5 H18 V24.2 H0.8 Z" fill="#9a9a9a"/>
<path d="M0.7 0.5 H14.3 L19.3 5.5 V23 H0.7 Z" fill="#000"/>
<path d="M1.7 1.5 H13.8 L18.3 6 V22 H1.7 Z" fill="#00f6f6"/>
<path d="M13.8 1.5 V6 H18.3" fill="#c8f8f8" stroke="#888" stroke-width="0.9"/>
<rect x="1.7" y="1.6" width="5.6" height="2.8" fill="#ff1a1a"/><rect x="2.6" y="2.2" width="3.8" height="1.6" fill="#fff"/><rect x="3.6" y="2.6" width="1.8" height="0.8" fill="#e00"/>
<path d="M8.3 1.5 V4.5 M10.5 3.6 H13.5 M2.5 5.5 H3.2 M4.5 5.5 H12 M1.7 7.5 H5 M12.3 7.5 H17.2 M1.7 9.9 H4.2 M13.8 9.9 H17.2 M1.7 14.4 H5 M15 14.4 H17.2 M1.7 17.4 H4.2 M13.8 17.4 H17.2 M1.7 20.4 H6.6 M12.3 20.4 H14.6 M15.8 20.4 H16.8" stroke="#000" stroke-width="1.1"/>
<text x="9.6" y="20" font-family="Liberation Sans" font-weight="bold" font-size="17" fill="#fff000" stroke="#000" stroke-width="0.6" paint-order="stroke" text-anchor="middle">$</text>
</svg><div class="a" style="left:158px;top:1173px;font-size:16px;line-height:22px">Forms</div><svg class="a" style="left:265px;top:1172px" width="34" height="23" viewBox="0 0 34 23"><path d="M3.5 7 H31.5 Q32.5 7 32.5 8 V21.5 H4.5 Q3.5 21.5 3.5 20.5 Z" fill="#c4c4c4" stroke="#111" stroke-width="1.1"/><rect x="3" y="16.5" width="27" height="2.5" fill="#7a7a7a"/><path d="M1.5 1 H27.5 Q28.5 1 28.5 2 V16.5 H2.5 Q1.5 16.5 1.5 15.5 Z" fill="#fff" stroke="#111" stroke-width="1.2"/><rect x="2.3" y="3" width="6" height="2.2" fill="#f00"/><text x="13" y="10.2" font-family="Liberation Sans" font-size="9" font-weight="bold" fill="#000">T6</text><rect x="5" y="12.2" width="20.5" height="3.4" fill="#8a8a8a"/><path d="M6.5 13.9 H9 M10.5 13.9 H13 M14.5 13.9 H17.5 M19 13.9 H21 M22.5 13.9 H24.5" stroke="#c8c8c8" stroke-width="1.4"/><rect x="28.5" y="2" width="1.5" height="14" fill="#9a9a9a"/></svg><div class="a" style="left:304px;top:1173px;font-size:16px;line-height:22px">T-Slips</div></body></html>
